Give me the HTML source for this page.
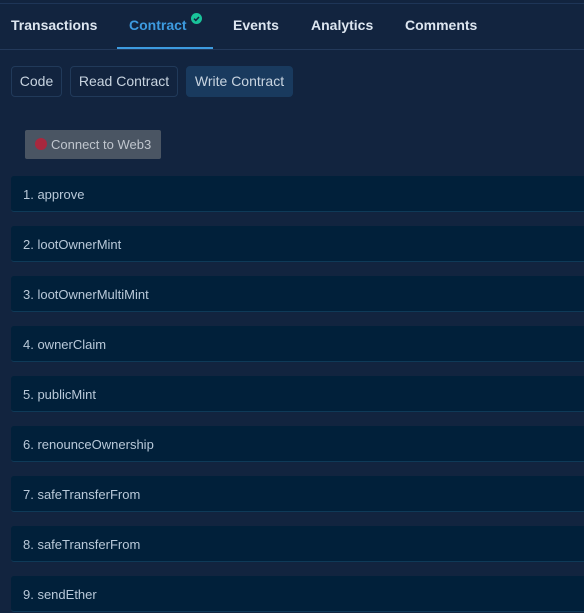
<!DOCTYPE html>
<html><head><style>
*{margin:0;padding:0;box-sizing:border-box}
body{width:584px;height:612px;overflow:hidden;background:#12243f;font-family:"Liberation Sans",sans-serif;position:relative}
.top{position:absolute;left:0;top:0;width:584px;height:4px;border-bottom:1px solid #1e3557;background:#12243f}
.tabs{position:absolute;top:0;left:0;width:584px;height:50px;border-bottom:1px solid #23395a}
.tab{position:absolute;top:17px;font-size:14px;font-weight:bold;color:#dde6f0;white-space:nowrap}
.act{color:#3d9be0}
.ul{position:absolute;left:117px;top:47px;width:96px;height:2px;background:#3d9be0}
.chk{position:absolute;left:191px;top:13px;width:11px;height:11px;border-radius:50%;background:#19c39a}
.btn{position:absolute;top:66px;height:31px;border:1px solid #213a5a;border-radius:4px;color:#c8d4e0;font-size:14px;line-height:29px;white-space:nowrap;text-align:center}
.conn{position:absolute;left:25px;top:130px;width:136px;height:29px;background:#4a5563;border-radius:2px;color:#c0c6ce;font-size:13px;line-height:29px;padding-left:26px;white-space:nowrap}
.dot{position:absolute;left:10px;top:8px;width:12px;height:12px;border-radius:50%;background:#a8283e}
.row{position:absolute;left:11px;width:573px;height:36px;background:#01203a;border-bottom:1px solid #0f3a58;color:#b9c9d9;font-size:13px;line-height:37px;padding-left:12px;border-radius:3px 0 0 3px}
</style></head><body>
<div class="tabs"></div>
<div class="top"></div>
<div class="tab" style="left:11px">Transactions</div>
<div class="tab act" style="left:129px">Contract</div>
<div class="chk"><svg width="11" height="11" viewBox="0 0 11 11" style="display:block"><path d="M3 5.6l1.8 1.8L8 4" stroke="#12243f" stroke-width="1.5" fill="none"/></svg></div>
<div class="tab" style="left:233px">Events</div>
<div class="tab" style="left:311px">Analytics</div>
<div class="tab" style="left:405px">Comments</div>
<div class="ul"></div>
<div class="btn" style="left:11px;width:51px">Code</div>
<div class="btn" style="left:70px;width:108px">Read Contract</div>
<div class="btn" style="left:186px;width:107px;background:#193a5e;border-color:#193a5e">Write Contract</div>
<div class="conn"><div class="dot"></div>Connect to Web3</div>
<div class="row" style="top:176px">1. approve</div>
<div class="row" style="top:226px">2. lootOwnerMint</div>
<div class="row" style="top:276px">3. lootOwnerMultiMint</div>
<div class="row" style="top:326px">4. ownerClaim</div>
<div class="row" style="top:376px">5. publicMint</div>
<div class="row" style="top:426px">6. renounceOwnership</div>
<div class="row" style="top:476px">7. safeTransferFrom</div>
<div class="row" style="top:526px">8. safeTransferFrom</div>
<div class="row" style="top:576px">9. sendEther</div>
</body></html>
